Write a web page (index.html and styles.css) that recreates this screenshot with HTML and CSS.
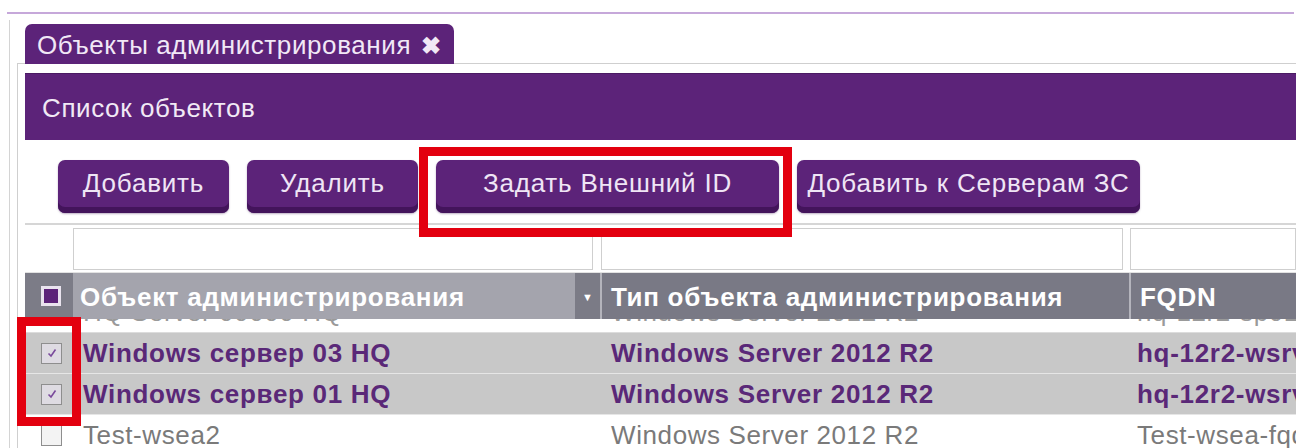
FILE: index.html
```html
<!DOCTYPE html>
<html lang="ru">
<head>
<meta charset="utf-8">
<title>Объекты администрирования</title>
<link rel="stylesheet" href="styles.css">
</head>
<body>
<div class="topline"></div>
<div class="workspace">
  <div class="tabs">
    <div class="tab">Объекты администрирования <span class="tab-close">✖</span></div>
  </div>
  <div class="panel">
    <div class="titlebar">Список объектов</div>
    <div class="toolbar">
      <button class="btn btn-sm">Добавить</button>
      <button class="btn btn-sm">Удалить</button>
      <button class="btn btn-lg">Задать Внешний ID</button>
      <button class="btn btn-lg">Добавить к Серверам ЗС</button>
    </div>
    <div class="grid">
      <div class="filter-row">
        <div class="fcell fcell-check"></div>
        <div class="fcell fcell-1"><input class="finput" type="text"></div>
        <div class="fcell fcell-2"><input class="finput" type="text"></div>
        <div class="fcell fcell-3"><input class="finput" type="text"></div>
      </div>
      <div class="head-row">
        <div class="hcell hcell-check"><span class="hbox"></span></div>
        <div class="hcell hcell-sorted">
          <span class="hlabel">Объект администрирования</span>
          <span class="sort-arrow">▼</span>
        </div>
        <div class="hcell hcell-sep">Тип объекта администрирования</div>
        <div class="hcell hcell-sep">FQDN</div>
      </div>
      <div class="row row-partial">
        <div class="cell"></div>
        <div class="cell">HQ Server 00000 HQ</div>
        <div class="cell">Windows Server 2012 R2</div>
        <div class="cell">hq-12r2-sp01</div>
      </div>
      <div class="row row-selected">
        <div class="cell cell-check"><span class="cbox checked"><svg viewBox="0 0 12 12" width="12" height="12"><path d="M2.5 6.5 L5 9 L9.5 2.5" fill="none" stroke="#7a4a9c" stroke-width="1.6"/></svg></span></div>
        <div class="cell">Windows сервер 03 HQ</div>
        <div class="cell">Windows Server 2012 R2</div>
        <div class="cell">hq-12r2-wsrv03.hq.local</div>
      </div>
      <div class="row row-selected">
        <div class="cell cell-check"><span class="cbox checked"><svg viewBox="0 0 12 12" width="12" height="12"><path d="M2.5 6.5 L5 9 L9.5 2.5" fill="none" stroke="#7a4a9c" stroke-width="1.6"/></svg></span></div>
        <div class="cell">Windows сервер 01 HQ</div>
        <div class="cell">Windows Server 2012 R2</div>
        <div class="cell">hq-12r2-wsrv01.hq.local</div>
      </div>
      <div class="row row-plain">
        <div class="cell cell-check"><span class="cbox"></span></div>
        <div class="cell">Test-wsea2</div>
        <div class="cell">Windows Server 2012 R2</div>
        <div class="cell">Test-wsea-fqdn.local</div>
      </div>
    </div>
  </div>
</div>
<div class="mark mark-button"></div>
<div class="mark mark-checks"></div>
</body>
</html>
```
FILE: styles.css
```css
html, body {
  margin: 0;
  padding: 0;
  overflow: hidden;
  background: #ffffff;
}

body {
  font-family: "Liberation Sans", Arial, sans-serif;
  width: 1296px;
  height: 448px;
  position: relative;
}

.topline {
  margin: 12px 2px 0 7px;
  height: 2px;
  background: #c6a8da;
}

.workspace {
  margin: 6px 0 0 9px;
  padding-top: 4px;
  border-left: 1px solid #d4d4d4;
}

.tabs {
  display: flex;
  padding-left: 15px;
  position: relative;
  z-index: 1;
}

.tab {
  height: 40px;
  line-height: 42px;
  padding: 0 12px 0 12px;
  background: #5c2379;
  color: #f1e8f6;
  font-size: 26px;
  letter-spacing: 0.6px;
  border-radius: 7px 7px 0 0;
  white-space: nowrap;
}

.tab-close {
  font-size: 24px;
  font-weight: bold;
  margin-left: 2px;
}

.panel {
  margin: -1px 0 0 7px;
  border-top: 1px solid #cfcfcf;
  border-left: 1px solid #cfcfcf;
  padding: 9px 0 0 7px;
}

.titlebar {
  height: 67px;
  line-height: 70px;
  padding-left: 17px;
  background: #5c2379;
  color: #f1e9f5;
  font-size: 26px;
  letter-spacing: 0.6px;
  box-shadow: inset 0 1px 0 #4a1a63;
}

.toolbar {
  display: flex;
  gap: 18px;
  padding: 20px 0 10px 33px;
}

.btn {
  height: 53px;
  padding: 0 0 6px;
  border: none;
  border-radius: 7px;
  background: #5c2379;
  color: #efe5f5;
  font-family: "Liberation Sans", Arial, sans-serif;
  font-size: 26px;
  letter-spacing: 0.8px;
  box-shadow: inset 0 -6px 0 #43145b, 0 1px 2px rgba(60, 20, 80, 0.35);
}

.btn-sm { width: 171px; }
.btn-lg { width: 343px; }

.grid {
  border-top: 2px solid #d6d6d6;
}

.filter-row,
.head-row,
.row {
  display: grid;
  grid-template-columns: 48px 527px 529px 1fr;
}

.filter-row {
  height: 47px;
  border-bottom: 1px solid #e2e2e2;
}

.fcell {
  padding-top: 3px;
}

.finput {
  display: block;
  box-sizing: border-box;
  height: 42px;
  width: 100%;
  border: 1px solid #cfcfcf;
  background: #ffffff;
  margin: 0;
}

.fcell-1 { padding-right: 7px; }
.fcell-2 { padding-left: 1px; padding-right: 6px; }
.fcell-3 { padding-left: 1px; }

.head-row {
  height: 46px;
  color: #ffffff;
  font-size: 26px;
  font-weight: bold;
  letter-spacing: 0.7px;
  line-height: 48px;
  background: #797985;
}

.hcell {
  white-space: nowrap;
  overflow: hidden;
}

.hcell-check {
  background: #7c7c87;
  display: flex;
  align-items: center;
  padding-left: 16px;
}

.hbox {
  width: 14px;
  height: 14px;
  border: 3px solid #e9e3ee;
  background: #5c2379;
}

.hcell-sorted {
  display: flex;
  background: #a4a4ad;
}

.hlabel {
  flex: 1;
  padding-left: 7px;
}

.sort-arrow {
  width: 25px;
  background: #7b7b86;
  font-size: 11px;
  letter-spacing: 0;
  text-align: center;
}

.hcell-sep {
  border-left: 2px solid #b4b4bc;
  padding-left: 9px;
}

.row {
  font-size: 26px;
  letter-spacing: 0.6px;
  line-height: 40px;
  white-space: nowrap;
}

.cell {
  overflow: hidden;
  padding-left: 10px;
}

.cell:nth-child(3) { padding-left: 11px; }
.cell:nth-child(4) { padding-left: 8px; }

.row-partial {
  height: 13px;
  overflow: hidden;
  color: #9a9a9a;
  border-bottom: 1px solid #dcdcdc;
}

.row-partial .cell {
  margin-top: -27px;
}

.row-selected {
  height: 40px;
  background: #c8c8c8;
  color: #5a2878;
  font-weight: bold;
  letter-spacing: 0.7px;
  border-bottom: 1px solid #e6e6e6;
}

.row-plain {
  height: 40px;
  color: #7a7a7a;
  background: #ffffff;
}

.cell-check {
  display: flex;
  align-items: center;
  padding-left: 16px;
}

.cbox {
  box-sizing: border-box;
  width: 21px;
  height: 21px;
  border: 1px solid #8e8e8e;
  background: #f3f3f3;
  display: flex;
  align-items: center;
  justify-content: center;
}

.cbox.checked {
  background: #dedbe2;
}

/* red highlight frames drawn over the page */
.mark {
  position: absolute;
  border: 9px solid #e3000f;
  box-sizing: border-box;
}

.mark-button {
  left: 419px;
  top: 147px;
  width: 373px;
  height: 90px;
}

.mark-checks {
  left: 17px;
  top: 317px;
  width: 64px;
  height: 109px;
}
```
